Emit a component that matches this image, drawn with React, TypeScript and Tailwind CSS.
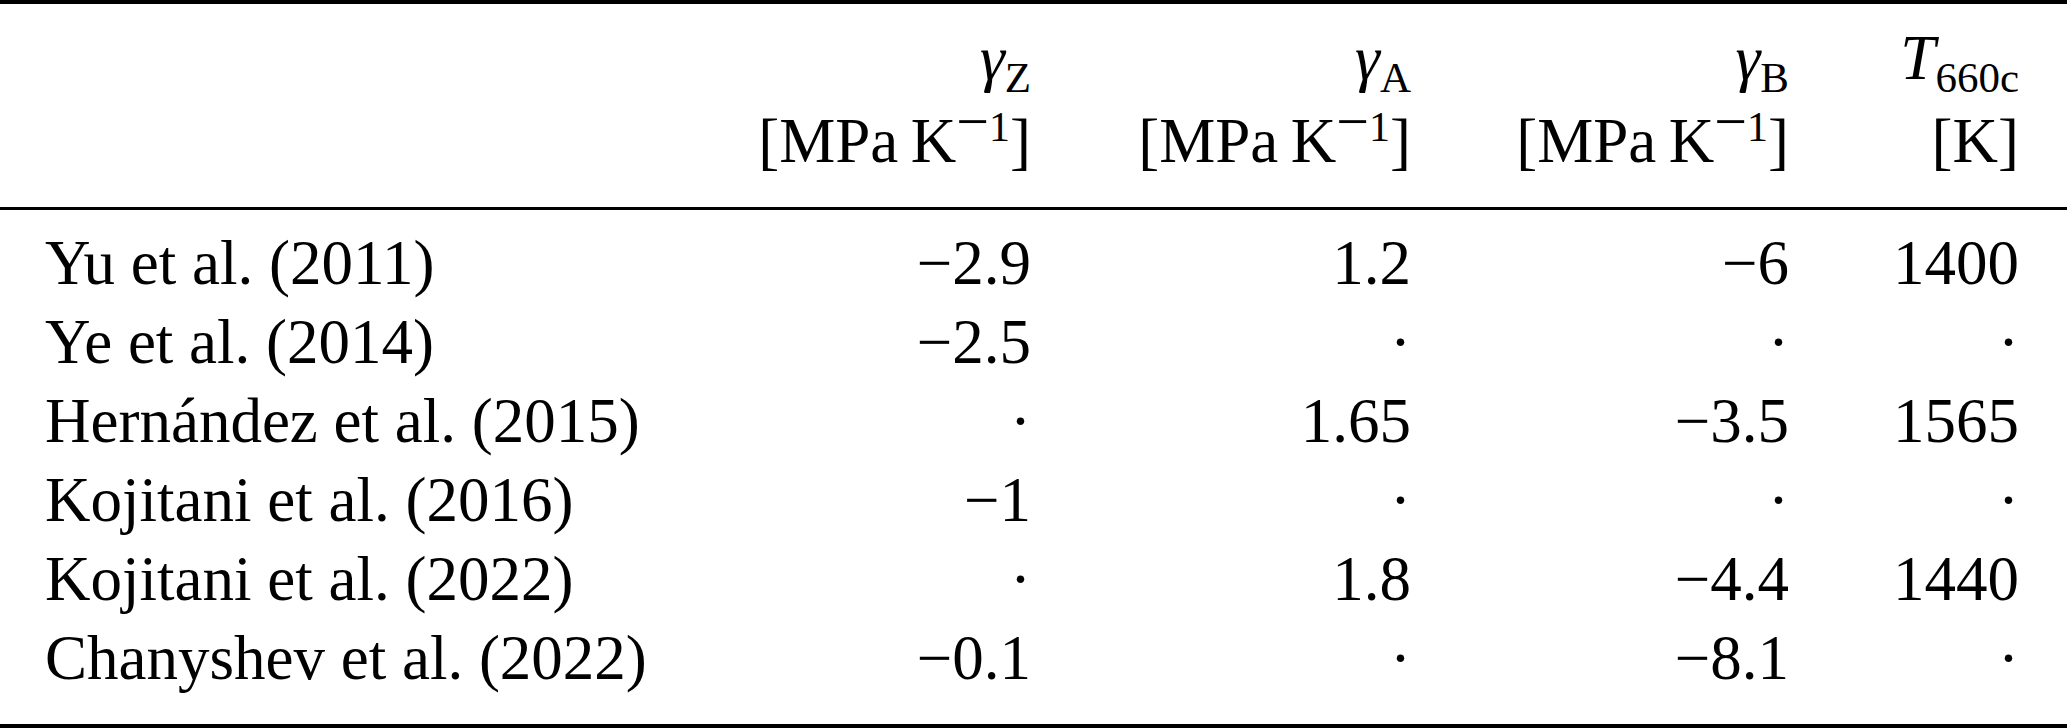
const rows = [
  { name: "Yu et al. (2011)", z: "−2.9", a: "1.2", b: "−6", t: "1400" },
  { name: "Ye et al. (2014)", z: "−2.5", a: "·", b: "·", t: "·" },
  { name: "Hernández et al. (2015)", z: "·", a: "1.65", b: "−3.5", t: "1565" },
  { name: "Kojitani et al. (2016)", z: "−1", a: "·", b: "·", t: "·" },
  { name: "Kojitani et al. (2022)", z: "·", a: "1.8", b: "−4.4", t: "1440" },
  { name: "Chanyshev et al. (2022)", z: "−0.1", a: "·", b: "−8.1", t: "·" },
];

const Unit = () => (
  <span>
    [MPa{"\u2009"}K
    <span className="align-[21px] leading-[0px]">
      <span className="text-[58px]">−</span>
      <span className="text-[42px]">1</span>
    </span>
    ]
  </span>
);

const Sub = ({ children }: { children: string }) => (
  <span className="text-[43px] leading-[0px] align-[-13px]">{children}</span>
);

const HeadCell = ({ top, bottom }: { top: React.ReactNode; bottom: React.ReactNode }) => (
  <div className="flex flex-col text-right whitespace-nowrap">
    <div className="leading-[88px]">{top}</div>
    <div className="leading-[79px]">{bottom}</div>
  </div>
);

const App = () => {
  return (
    <div className="w-[2067px] h-[728px] bg-white text-black font-['Liberation_Serif',serif] text-[63px]">
      {/* top rule */}
      <div className="h-[4px] bg-black"></div>

      {/* header */}
      <div className="grid grid-cols-[700px_331px_380px_378px_230px] h-[203px] pt-[10px]">
        <div></div>
        <HeadCell
          top={
            <>
              <i>γ</i>
              <Sub>Z</Sub>
            </>
          }
          bottom={<Unit />}
        />
        <HeadCell
          top={
            <>
              <i>γ</i>
              <Sub>A</Sub>
            </>
          }
          bottom={<Unit />}
        />
        <HeadCell
          top={
            <>
              <i>γ</i>
              <Sub>B</Sub>
            </>
          }
          bottom={<Unit />}
        />
        <HeadCell
          top={
            <>
              <i>T</i>
              <Sub>660c</Sub>
            </>
          }
          bottom={<span>[K]</span>}
        />
      </div>

      {/* mid rule */}
      <div className="h-[3px] bg-black"></div>

      {/* body */}
      <div className="grid grid-cols-[700px_331px_380px_378px_230px] pt-[14px] pb-[26px] leading-[79px]">
        {rows.map((r) => (
          <div key={r.name} className="contents">
            <div className="pl-[45px] whitespace-nowrap">{r.name}</div>
            <div className="text-right">{r.z}</div>
            <div className="text-right">{r.a}</div>
            <div className="text-right">{r.b}</div>
            <div className="text-right">{r.t}</div>
          </div>
        ))}
      </div>

      {/* bottom rule */}
      <div className="h-[4px] bg-black"></div>
    </div>
  );
};

export default App;
